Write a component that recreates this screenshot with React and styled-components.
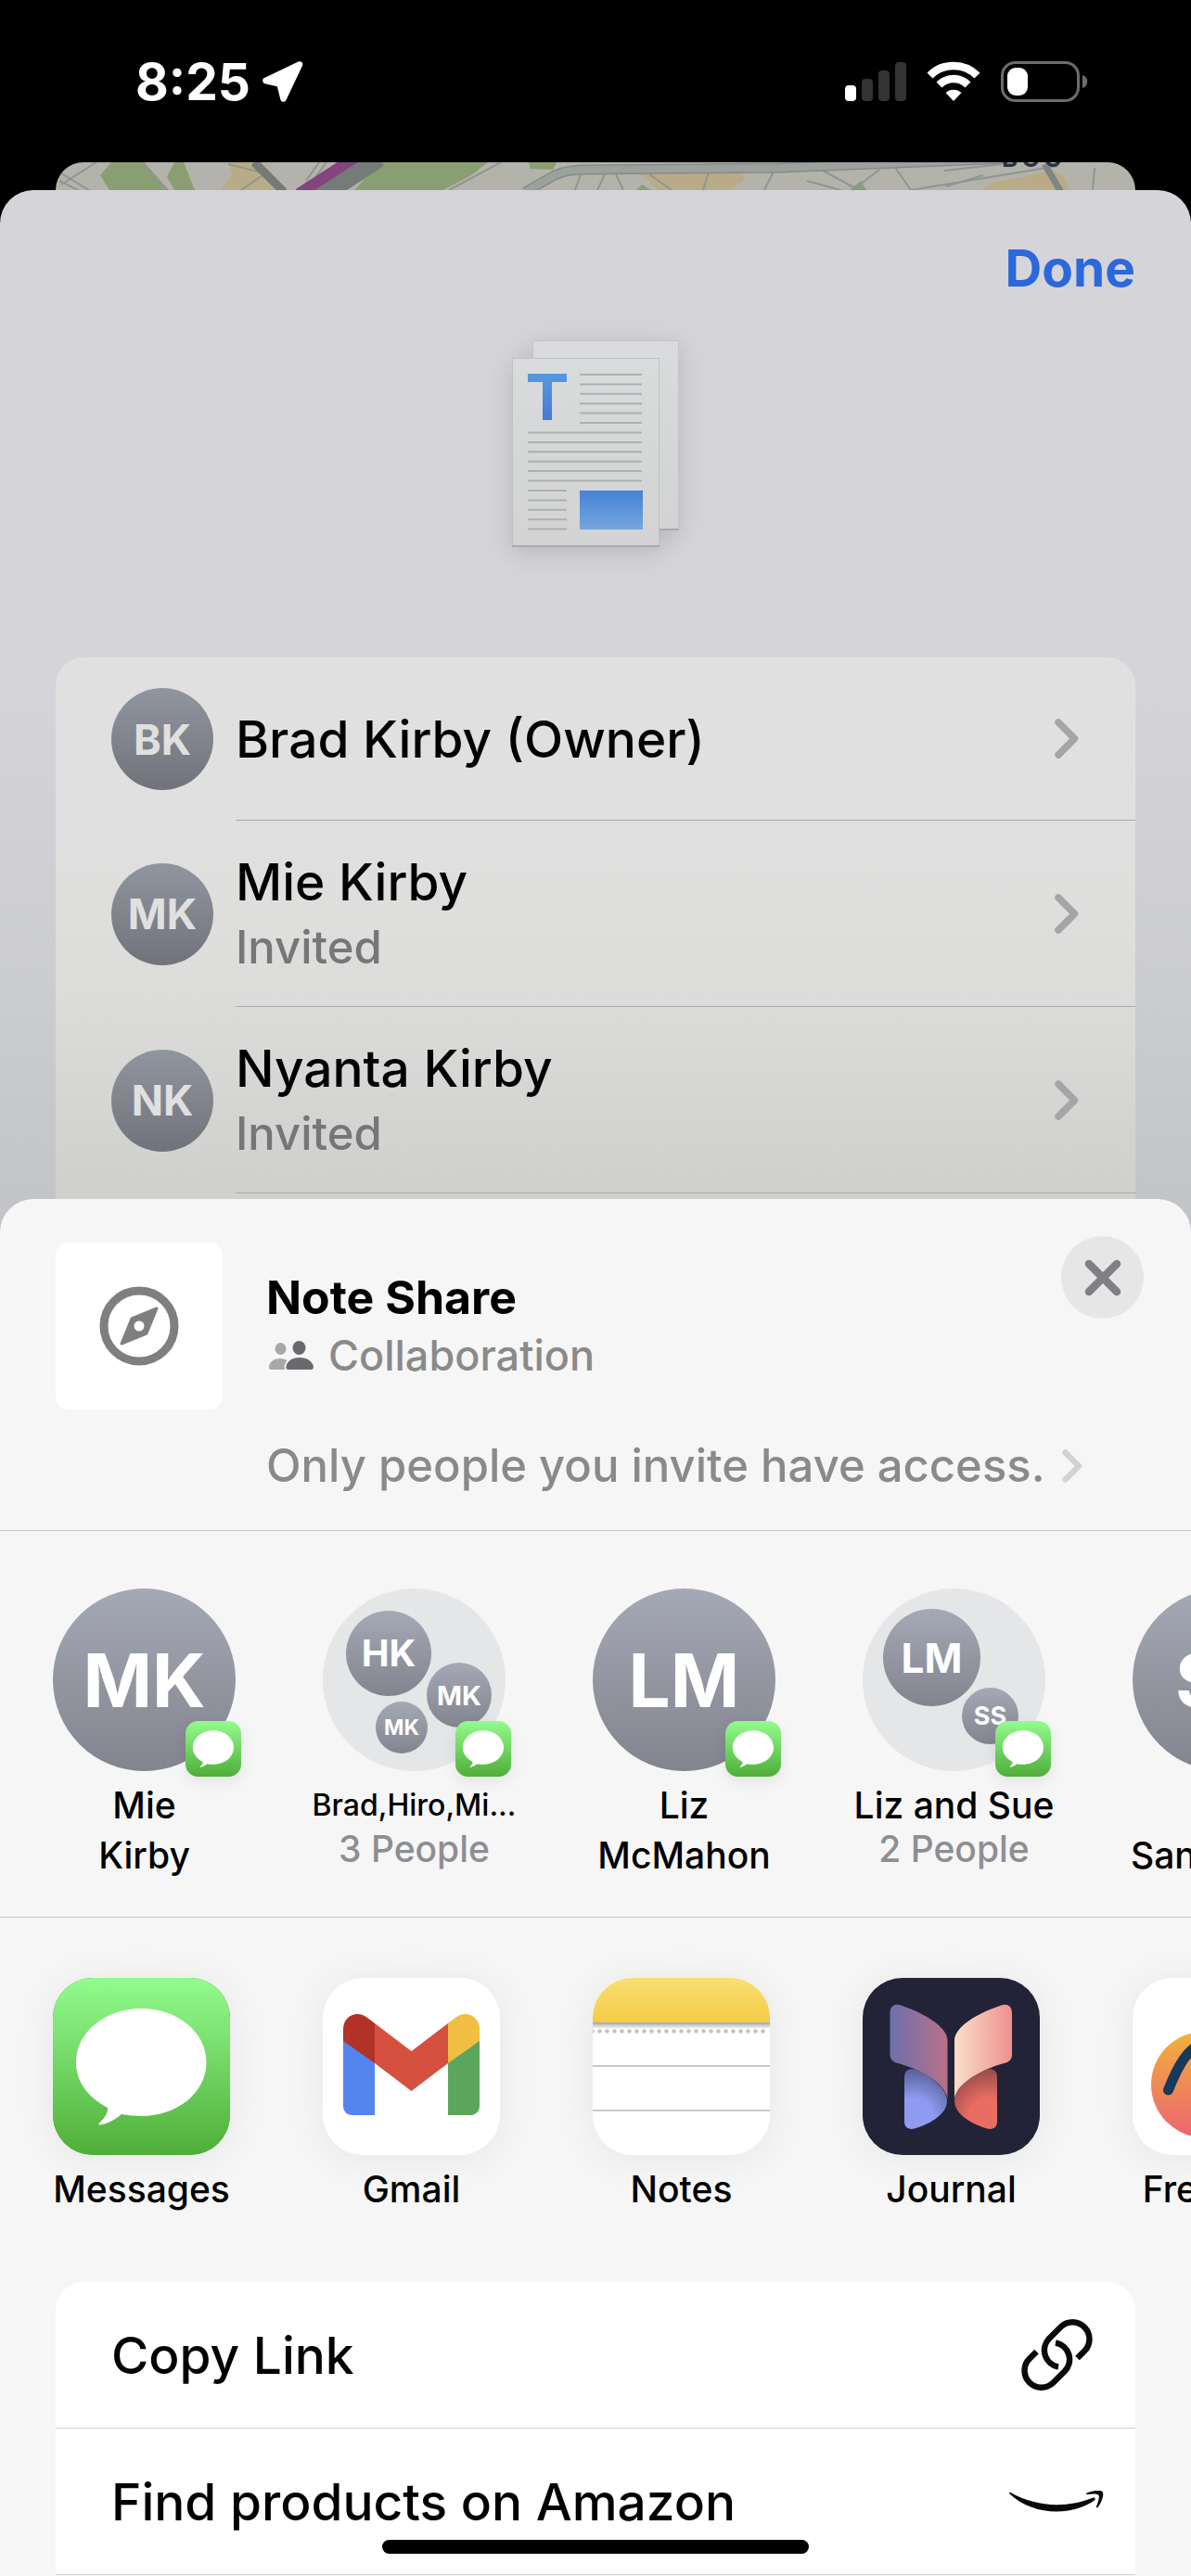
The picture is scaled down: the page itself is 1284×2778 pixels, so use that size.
import React from "react";
import styled, { createGlobalStyle } from "styled-components";

const GlobalStyle = createGlobalStyle`
  *, *::before, *::after { box-sizing: border-box; }
  body {
    margin: 0;
    background: #000;
    font-family: Inter, "Liberation Sans", sans-serif;
    color: #000;
  }
  button, a {
    font: inherit;
    color: inherit;
    background: none;
    border: 0;
    padding: 0;
    text-align: left;
    text-decoration: none;
    cursor: pointer;
  }
  h1, p, ul { margin: 0; padding: 0; }
  ul { list-style: none; }
  svg { display: block; flex: none; }
`;

const Screen = styled.div`
  position: relative;
  display: flex;
  flex-direction: column;
  min-height: 100vh;
  overflow: hidden;
`;

/* ---------- status bar ---------- */

const StatusBar = styled.header`
  display: flex;
  justify-content: space-between;
  align-items: center;
  height: 175px;
  padding: 0 111px 0 146px;
  color: #fff;
`;

const StatusGroup = styled.div`
  display: flex;
  align-items: center;
  gap: ${(p) => p.$gap}px;
`;

const Clock = styled.time`
  font-size: 55px;
  line-height: 64px;
  font-weight: 700;
`;

/* ---------- people sheet ---------- */

const MapPeek = styled.div`
  height: 30px;
  margin: 0 60px;
  border-radius: 30px 30px 0 0;
  overflow: hidden;
  background: #b3b3ab;
`;

const PeopleSheet = styled.main`
  display: flex;
  flex-direction: column;
  padding: 48px 60px 0;
  border-radius: 36px 36px 0 0;
  background: linear-gradient(#d5d4d9 0, #d5d4d9 45%, #cccdd1 75%, #c2c3c6 100%);
`;

const DoneButton = styled.button`
  align-self: flex-end;
  font-size: 55px;
  line-height: 72px;
  font-weight: 700;
  color: #2b68dc;
`;

const DocumentArt = styled.div`
  align-self: center;
  margin: 42px 0 119px;
  filter: drop-shadow(0 6px 14px rgba(0, 0, 0, 0.14));
`;

const PeopleList = styled.ul`
  padding-bottom: 46px;
  border-radius: 30px 30px 0 0;
  background: linear-gradient(#e0e0e0 0, #e0e0e0 30%, #dcdcda 58%, #d0d1ce 90%);
`;

const PersonRow = styled.button`
  display: flex;
  align-items: center;
  gap: 24px;
  width: 100%;
  padding-left: 60px;
`;

const PersonBody = styled.span`
  flex: 1;
  display: flex;
  align-items: center;
  justify-content: space-between;
  height: ${(p) => (p.$tall ? 201 : 176)}px;
  padding-right: 61px;
  border-bottom: 1px solid #a9aaab;
`;

const PersonText = styled.span`
  display: flex;
  flex-direction: column;
  padding-top: ${(p) => (p.$tall ? 4 : 0)}px;
`;

const PersonName = styled.span`
  font-size: 55px;
  line-height: 70px;
  font-weight: 500;
`;

const PersonStatus = styled.span`
  font-size: 49px;
  line-height: 72px;
  font-weight: 500;
  color: #757676;
`;

const Avatar = styled.span`
  flex: none;
  display: flex;
  align-items: center;
  justify-content: center;
  width: ${(p) => p.$size}px;
  height: ${(p) => p.$size}px;
  border-radius: 50%;
  font-size: ${(p) => p.$font}px;
  line-height: 1;
  font-weight: 700;
  color: ${(p) => (p.$dim ? "#e0e0e0" : "#fff")};
  background: ${(p) =>
    p.$dim
      ? "linear-gradient(#9195a0, #70737a)"
      : "linear-gradient(#a5a9b5, #82848e)"};
`;

/* ---------- share sheet ---------- */

const ShareSheet = styled.section`
  position: relative;
  flex: 1;
  margin-top: -40px;
  border-radius: 36px 36px 0 0;
  background: #f6f6f6;
`;

const ShareHeader = styled.div`
  display: grid;
  grid-template-columns: 180px 1fr 89px;
  column-gap: 47px;
  row-gap: 29px;
  padding: 40px 51px 37px 60px;
  border-bottom: 1px solid #c9c9c9;
`;

const Thumbnail = styled.div`
  display: flex;
  align-items: center;
  justify-content: center;
  height: 180px;
  margin-top: 7px;
  border-radius: 14px;
  background: #fff;
`;

const ShareTitles = styled.div`
  padding-top: 34px;
`;

const ShareTitle = styled.h1`
  font-size: 50px;
  line-height: 64px;
  font-weight: 700;
`;

const ShareKind = styled.p`
  display: flex;
  align-items: center;
  gap: 16px;
  padding-left: 3px;
  font-size: 45px;
  line-height: 62px;
  font-weight: 500;
  color: #8a8a8a;
`;

const CloseButton = styled.button`
  display: flex;
  align-items: center;
  justify-content: center;
  width: 89px;
  height: 89px;
  border-radius: 50%;
  background: #e6e6e6;
`;

const AccessLink = styled.a`
  grid-column: 2 / span 2;
  display: flex;
  align-items: center;
  gap: 18px;
  font-size: 49px;
  line-height: 64px;
  font-weight: 500;
  color: #8a8a8a;
  white-space: nowrap;
`;

const Strip = styled.ul`
  display: flex;
  gap: ${(p) => p.$gap}px;
  padding: ${(p) => p.$pad};
  border-bottom: ${(p) => (p.$ruled ? "1px solid #c9c9c9" : "0")};
  overflow: hidden;
`;

const ContactButton = styled.button`
  display: flex;
  flex-direction: column;
  align-items: center;
  width: 251px;
  height: 315px;
`;

const ContactPicture = styled.span`
  position: relative;
  display: block;
  margin-bottom: 10px;
`;

const GroupCircle = styled.span`
  display: block;
  width: 197px;
  height: 197px;
  border-radius: 50%;
  background: #e5e6e8;
`;

const GroupMember = styled.span`
  position: absolute;
  left: ${(p) => p.$x}px;
  top: ${(p) => p.$y}px;
`;

const Badge = styled.span`
  position: absolute;
  right: -6px;
  bottom: -6px;
  border-radius: 14px;
  box-shadow: 0 6px 16px rgba(0, 0, 0, 0.08);
`;

const ContactName = styled.span`
  font-size: ${(p) => (p.$small ? 32 : 39)}px;
  line-height: 54px;
  font-weight: 500;
  text-align: center;
  white-space: pre-line;
`;

const ContactCount = styled.span`
  font-size: 39px;
  line-height: 40px;
  font-weight: 500;
  color: #8e8e92;
`;

const AppButton = styled.button`
  display: flex;
  flex-direction: column;
  align-items: center;
  gap: 10px;
  width: 191px;
  font-size: 39px;
  line-height: 54px;
  font-weight: 500;
`;

const AppIcon = styled.span`
  display: block;
  width: 191px;
  height: 191px;
  border-radius: 43px;
  overflow: hidden;
  background: ${(p) => p.$bg};
  box-shadow: 0 4px 44px rgba(0, 0, 0, 0.07);
`;

const ActionList = styled.ul`
  margin: 0 60px;
  border-radius: 30px 30px 0 0;
  background: #fff;
`;

const ActionButton = styled.button`
  display: flex;
  align-items: center;
  justify-content: space-between;
  width: 100%;
  height: 158px;
  padding: 0 34px 0 60px;
  border-bottom: 1px solid #cfcfd1;
  font-size: 55px;
  line-height: 72px;
  font-weight: 500;
`;

const ActionIcon = styled.span`
  display: flex;
  justify-content: center;
  width: 102px;
`;

const HomeIndicator = styled.div`
  position: absolute;
  left: 50%;
  bottom: 24px;
  width: 460px;
  height: 15px;
  margin-left: -230px;
  border-radius: 8px;
  background: #000;
`;

/* ---------- drawings ---------- */

const LocationArrow = () => (
  <svg width="46" height="46" viewBox="0 0 46 46" aria-hidden="true">
    <path
      d="M41 4.500 L4.500 22 L19.500 25.500 L23.500 41.500 Z"
      fill="#fff"
      stroke="#fff"
      strokeWidth="6.500"
      strokeLinejoin="round"
    />
  </svg>
);

const SignalIcon = () => (
  <svg width="66" height="43" viewBox="0 0 66 43" aria-hidden="true">
    <rect x="0" y="26" width="12" height="17" rx="4" fill="#fff" />
    <rect x="18" y="19" width="12" height="24" rx="4" fill="#333" />
    <rect x="36" y="10" width="12" height="33" rx="4" fill="#333" />
    <rect x="54" y="1" width="12" height="42" rx="4" fill="#333" />
  </svg>
);

const WifiIcon = () => (
  <svg width="58" height="43" viewBox="0 0 58 43" aria-hidden="true">
    <path d="M29 43 L20.5 34 A12.5 12.5 0 0 1 37.5 34 Z" fill="#fff" />
    <path
      d="M13.5 25.5 A22 22 0 0 1 44.5 25.5"
      fill="none"
      stroke="#fff"
      strokeWidth="8.5"
    />
    <path
      d="M3.5 15.5 A36 36 0 0 1 54.5 15.5"
      fill="none"
      stroke="#fff"
      strokeWidth="8.5"
    />
  </svg>
);

const BatteryIcon = () => (
  <svg width="94" height="44" viewBox="0 0 94 44" aria-hidden="true">
    <rect x="1.5" y="1.5" width="82" height="41" rx="14" fill="none" stroke="#6c6c6a" strokeWidth="3" />
    <rect x="7" y="7" width="22" height="30" rx="9" fill="#fff" />
    <path d="M88 15 C95 17 95 27 88 29 Z" fill="#6c6c6a" />
  </svg>
);

const MapArt = () => (
  <svg width="100%" height="30" viewBox="0 0 1164 30" preserveAspectRatio="xMidYMid slice" aria-hidden="true">
    <g fill="#899f72">
      <path d="M60 0 H95 L122 30 H58 L48 14 Z" />
      <path d="M128 0 H138 L150 30 H128 L120 16 Z" />
      <path d="M350 0 H466 L448 14 L418 30 H322 Z" />
      <path d="M510 0 H540 L536 8 L512 7 Z" />
      <path d="M632 24 L642 30 H626 Z" />
      <path d="M868 20 L874 30 H856 Z" />
    </g>
    <g fill="#b9ab87">
      <path d="M186 0 H222 L250 30 H178 L190 14 Z" />
      <path d="M630 13 L740 11 L742 20 L726 30 H650 Z" />
      <path d="M1010 22 L1076 9 L1086 14 L1092 30 H998 Z" />
    </g>
    <g fill="none" stroke="#8f9593" strokeWidth="2">
      <path d="M44 0 L6 24 M6 12 L36 30 M4 20 L24 30" />
      <path d="M94 0 L120 30 M200 30 L226 12 L186 2 M284 0 L270 20 M292 0 L270 30" />
      <path d="M480 0 L424 30 M560 30 L566 13 M584 30 L592 13 M604 13 L612 30 M640 13 L664 30" />
      <path d="M704 10 L698 30 M774 10 L764 30 M810 20 L846 30 M822 6 L862 28 M862 28 L888 8" />
      <path d="M904 4 L922 30 M922 30 L1080 4 M958 9 L1020 2 M960 26 L1000 14 M1120 6 L1118 30" />
    </g>
    <path d="M274 40 L346 -8" fill="none" stroke="#747b78" strokeWidth="28" />
    <path d="M262 34 L324 -6" fill="none" stroke="#84447e" strokeWidth="12" />
    <path d="M214 0 L246 32" fill="none" stroke="#737a78" strokeWidth="9" />
    <path d="M506 32 L538 14 Q548 9 566 8 L780 6 L1030 -4" fill="none" stroke="#858b89" strokeWidth="11" />
    <path d="M506 32 L538 14 Q548 9 566 8 L780 6 L1030 -4" fill="none" stroke="#9da19e" strokeWidth="8" />
    <path d="M1066 2 L1084 32" fill="none" stroke="#7f8583" strokeWidth="7" />
    <text x="1020" y="5" fontSize="26" fontWeight="700" letterSpacing="4" fill="#2a333d">
      BOO
    </text>
  </svg>
);

const range = (n) => Array.from({ length: n }, (_, i) => i);

const DocumentIcon = () => (
  <svg width="180" height="223" viewBox="0 0 180 223" aria-hidden="true">
    <defs>
      <linearGradient id="docPage" x1="0" y1="0" x2="0" y2="1">
        <stop offset="0" stopColor="#d9dbdc" />
        <stop offset="1" stopColor="#d2d3d2" />
      </linearGradient>
      <linearGradient id="docT" x1="0" y1="0" x2="0" y2="1">
        <stop offset="0" stopColor="#5798de" />
        <stop offset="1" stopColor="#457bd6" />
      </linearGradient>
      <linearGradient id="docPhoto" x1="0" y1="0" x2="0" y2="1">
        <stop offset="0" stopColor="#4482d8" />
        <stop offset="1" stopColor="#77a6dc" />
      </linearGradient>
    </defs>
    <rect x="22.5" y="0.5" width="157" height="203" fill="url(#docPage)" stroke="#c3c4c5" />
    <path d="M159 204 H180" stroke="#a9aaab" strokeWidth="2" />
    <rect x="0.5" y="19.5" width="158" height="203" fill="url(#docPage)" stroke="#c0c1c2" />
    <path d="M0 222 H159" stroke="#a9aaab" strokeWidth="2" />
    <path d="M17 36 H59 V45 H43 V86 H33 V45 H17 Z" fill="url(#docT)" />
    <g stroke="#adafb0" strokeWidth="2">
      {range(6).map((i) => (
        <path key={i} d={`M73 ${37 + i * 10.4} H140`} />
      ))}
      {range(6).map((i) => (
        <path key={i} d={`M17 ${99.5 + i * 10.4} H140`} />
      ))}
      {range(5).map((i) => (
        <path key={i} d={`M17 ${162 + i * 10.4} H59`} />
      ))}
    </g>
    <rect x="73" y="162" width="68" height="42" fill="url(#docPhoto)" />
  </svg>
);

const Chevron = ({ width = 26, height = 43, color = "#a5a5a5" }) => (
  <svg width={width} height={height} viewBox="0 0 26 43" aria-hidden="true">
    <path
      d="M4 4 L21.5 21.5 L4 39"
      fill="none"
      stroke={color}
      strokeWidth="7.5"
      strokeLinecap="round"
      strokeLinejoin="round"
    />
  </svg>
);

const CompassIcon = () => (
  <svg width="86" height="86" viewBox="0 0 86 86" aria-hidden="true">
    <circle cx="43" cy="43" r="38" fill="none" stroke="#7f7f7f" strokeWidth="9" />
    <path
      d="M62 24 L51 51 L24 62 L35 35 Z M43 37.5 A5.5 5.5 0 1 0 43 48.500 A5.5 5.5 0 1 0 43 37.5 Z"
      fill="#7f7f7f"
      fillRule="evenodd"
    />
    <path d="M62 24 L51 51 L24 62 L35 35 Z" fill="none" stroke="#7f7f7f" strokeWidth="3" strokeLinejoin="round" />
  </svg>
);

const PeopleIcon = () => (
  <svg width="48" height="32" viewBox="0 0 48 32" aria-hidden="true">
    <g fill="#a8a8aa">
      <ellipse cx="12.500" cy="8.500" rx="6" ry="6.500" />
      <path d="M2 31 C0 31 0 29 0 28 C1 22 6 19 12 19 C15 19 18 20 19.500 21 C17 24 16 28 17 31 Z" />
    </g>
    <g fill="#6a6a6e">
      <ellipse cx="32.500" cy="7.500" rx="7" ry="7.500" />
      <path d="M21 31 C19 31 18 30 18.500 28 C19 22 25 18 33 18 C41 18 47 22 48 28 C48 30 47 31 45 31 Z" />
    </g>
  </svg>
);

const CloseIcon = () => (
  <svg width="40" height="40" viewBox="0 0 40 40" aria-hidden="true">
    <path d="M5 5 L35 35 M35 5 L5 35" stroke="#7f7f84" strokeWidth="8.500" strokeLinecap="round" />
  </svg>
);

const MessagesArt = ({ size, id }) => (
  <svg width={size} height={size} viewBox="0 0 191 191" aria-hidden="true">
    <defs>
      <linearGradient id={id} x1="0" y1="0" x2="0" y2="1">
        <stop offset="0" stopColor="#93fc8e" />
        <stop offset="1" stopColor="#4fae38" />
      </linearGradient>
    </defs>
    <rect width="191" height="191" rx="43" fill={`url(#${id})`} />
    <path
      d="M95.500 33 C134 33 165.500 58 165.500 91 C165.500 124 134 149 95.500 149 C88 149 81 148 74 147 C68 152 60 157 51 158.500 C49 159 49 157.500 50 156.500 C55 152 60 146 59 140 C38 129 25 112 25 91 C25 58 57 33 95.500 33 Z"
      fill="#fff"
    />
  </svg>
);

const GmailArt = () => (
  <svg width="191" height="191" viewBox="0 0 191 191" aria-hidden="true">
    <path d="M22 66 L56 91 V148 H32 C26 148 22 144 22 138 Z" fill="#5484ed" />
    <path d="M169 66 L135 91 V148 H159 C165 148 169 144 169 138 Z" fill="#5ba65c" />
    <path d="M56 49 L95.500 79 L135 49 V92 L95.500 122 L56 92 Z" fill="#d6503f" />
    <path d="M22 55 C22 42 36 34 47.500 42.500 L56 49 V92 L22 68 Z" fill="#b23229" />
    <path d="M169 55 C169 42 155 34 143.500 42.500 L135 49 V92 L169 68 Z" fill="#f0be42" />
  </svg>
);

const NotesArt = () => (
  <svg width="191" height="191" viewBox="0 0 191 191" aria-hidden="true">
    <defs>
      <linearGradient id="notesTop" x1="0" y1="0" x2="0" y2="1">
        <stop offset="0" stopColor="#f9df76" />
        <stop offset="1" stopColor="#f4cc45" />
      </linearGradient>
      <linearGradient id="notesShade" x1="0" y1="0" x2="0" y2="1">
        <stop offset="0" stopColor="#a2a2a2" />
        <stop offset="1" stopColor="#fff" />
      </linearGradient>
    </defs>
    <rect width="191" height="48" fill="url(#notesTop)" />
    <rect y="48" width="191" height="7" fill="url(#notesShade)" />
    {range(24).map((i) => (
      <circle key={i} cx={-0.5 + i * 8} cy="57.500" r="2.200" fill="#c2c2c2" />
    ))}
    <path d="M0 95 H191 M0 143 H191" stroke="#c8c8c8" strokeWidth="2" />
  </svg>
);

const JournalArt = () => (
  <svg width="191" height="191" viewBox="0 0 191 191" aria-hidden="true">
    <defs>
      <linearGradient id="wingLeft">
        <stop offset="0" stopColor="#6d70ae" />
        <stop offset="1" stopColor="#b87089" />
      </linearGradient>
      <linearGradient id="wingRight">
        <stop offset="0" stopColor="#f9dfc7" />
        <stop offset="1" stopColor="#ef908f" />
      </linearGradient>
      <radialGradient id="tailLeft" gradientUnits="userSpaceOnUse" cx="54" cy="152" r="56">
        <stop offset="0.4" stopColor="#8e9bf1" />
        <stop offset="1" stopColor="#545b91" />
      </radialGradient>
      <radialGradient id="tailRight" gradientUnits="userSpaceOnUse" cx="137" cy="152" r="56">
        <stop offset="0.4" stopColor="#ea6d62" />
        <stop offset="1" stopColor="#8e4a4b" />
      </radialGradient>
    </defs>
    <path d="M45 107 C45 99 51 97 57 99 C76 107 91 120 91 133 C91 147 72 158 56 162.500 C49 164 45 161 45 155 Z" fill="url(#tailLeft)" />
    <path d="M145 107 C145 99 139 97 133 99 C114 107 99 120 99 133 C99 147 118 158 134 162.500 C141 164 145 161 145 155 Z" fill="url(#tailRight)" />
    <path d="M29.500 38 C29.500 31 34 27 41 29.500 C66 38 91.500 52 91.500 68 V130 C88 112 60 98 38 92 C33 91 29.500 88 29.500 83 Z" fill="url(#wingLeft)" />
    <path d="M161 38 C161 31 156.500 27 149.500 29.500 C124.500 38 99 52 99 68 V130 C102.500 112 130.500 98 152.500 92 C157.500 91 161 88 161 83 Z" fill="url(#wingRight)" />
  </svg>
);

const FreeformArt = () => (
  <svg width="191" height="191" viewBox="0 0 191 191" aria-hidden="true">
    <defs>
      <linearGradient id="freeformSun" x1="0" y1="0" x2="0" y2="1">
        <stop offset="0" stopColor="#f2b13c" />
        <stop offset="1" stopColor="#ec6470" />
      </linearGradient>
    </defs>
    <circle cx="77" cy="115" r="57" fill="url(#freeformSun)" />
    <path
      d="M38.500 121 C46 102 56 83 66 76 C80 68 76 104 88 104 C104 104 108 76 124 70"
      fill="none"
      stroke="#17395b"
      strokeWidth="11"
      strokeLinecap="round"
    />
  </svg>
);

const LinkIcon = () => (
  <svg width="77" height="77" viewBox="0 0 77 77" aria-hidden="true">
    <g fill="none" stroke="#0a0a0a" strokeWidth="6.500">
      <path d="M60.500 42 L68 34.500 A18.200 18.200 0 0 0 42.500 8.500 L30 21 A18.200 18.200 0 0 0 40 51.500" />
      <path d="M16.500 35 L9 42.500 A18.200 18.200 0 0 0 34.500 68.500 L47 56 A18.200 18.200 0 0 0 37 25.500" />
    </g>
  </svg>
);

const SmileIcon = () => (
  <svg width="102" height="24" viewBox="0 0 102 24" aria-hidden="true">
    <path d="M1 1.800 C30 18 62 19 90.500 7.500 C92.500 7 93.500 9 92 10.500 C66 28 26 27 0.500 3.500 C-0.200 2.500 0.300 1.500 1 1.800 Z" fill="#0a0a0a" />
    <path d="M83 3 C88 0 98 -1 100.500 1 C103 4 99 14 95.500 18 C94.500 19 93.500 18 94 17 C96 12 97.500 7 96.500 5 C95 3 89 3.500 84 4 C83 4.200 82.500 3.500 83 3 Z" fill="#0a0a0a" />
  </svg>
);

/* ---------- data ---------- */

const people = [
  { initials: "BK", name: "Brad Kirby (Owner)" },
  { initials: "MK", name: "Mie Kirby", status: "Invited" },
  { initials: "NK", name: "Nyanta Kirby", status: "Invited" },
];

const contacts = [
  { name: "Mie\nKirby", initials: "MK" },
  {
    name: "Brad,Hiro,Mi...",
    small: true,
    count: "3 People",
    members: [
      { initials: "HK", x: 25, y: 24, size: 92, font: 40 },
      { initials: "MK", x: 112, y: 80, size: 70, font: 29 },
      { initials: "MK", x: 57, y: 122, size: 56, font: 23 },
    ],
  },
  { name: "Liz\nMcMahon", initials: "LM" },
  {
    name: "Liz and Sue",
    count: "2 People",
    members: [
      { initials: "LM", x: 22, y: 22, size: 105, font: 44 },
      { initials: "SS", x: 107, y: 107, size: 61, font: 27 },
    ],
  },
  { name: "Sue\nSanderson", initials: "SS" },
];

const apps = [
  { name: "Messages", bg: "#4fae38", art: <MessagesArt size={191} id="messagesApp" /> },
  { name: "Gmail", bg: "#fff", art: <GmailArt /> },
  { name: "Notes", bg: "#fff", art: <NotesArt /> },
  { name: "Journal", bg: "#222336", art: <JournalArt /> },
  { name: "Freeform", bg: "#fff", art: <FreeformArt /> },
];

const actions = [
  { label: "Copy Link", icon: <LinkIcon /> },
  { label: "Find products on Amazon", icon: <SmileIcon /> },
];

/* ---------- parts ---------- */

const Person = ({ initials, name, status }) => (
  <li>
    <PersonRow type="button">
      <Avatar $size={110} $font={45} $dim>
        {initials}
      </Avatar>
      <PersonBody $tall={Boolean(status)}>
        <PersonText $tall={Boolean(status)}>
          <PersonName>{name}</PersonName>
          {status && <PersonStatus>{status}</PersonStatus>}
        </PersonText>
        <Chevron />
      </PersonBody>
    </PersonRow>
  </li>
);

const Contact = ({ index, name, initials, members, count, small }) => (
  <li>
    <ContactButton type="button">
      <ContactPicture>
        {members ? (
          <GroupCircle>
            {members.map((m, i) => (
              <GroupMember key={i} $x={m.x} $y={m.y}>
                <Avatar $size={m.size} $font={m.font}>
                  {m.initials}
                </Avatar>
              </GroupMember>
            ))}
          </GroupCircle>
        ) : (
          <Avatar $size={197} $font={80}>
            {initials}
          </Avatar>
        )}
        <Badge>
          <MessagesArt size={60} id={`messagesBadge${index}`} />
        </Badge>
      </ContactPicture>
      <ContactName $small={small}>{name}</ContactName>
      {count && <ContactCount>{count}</ContactCount>}
    </ContactButton>
  </li>
);

export default function App() {
  return (
    <Screen>
      <GlobalStyle />
      <StatusBar>
        <StatusGroup $gap={12}>
          <Clock>8:25</Clock>
          <LocationArrow />
        </StatusGroup>
        <StatusGroup $gap={22}>
          <SignalIcon />
          <WifiIcon />
          <BatteryIcon />
        </StatusGroup>
      </StatusBar>

      <MapPeek>
        <MapArt />
      </MapPeek>

      <PeopleSheet>
        <DoneButton type="button">Done</DoneButton>
        <DocumentArt>
          <DocumentIcon />
        </DocumentArt>
        <PeopleList>
          {people.map((p) => (
            <Person key={p.name} {...p} />
          ))}
        </PeopleList>
      </PeopleSheet>

      <ShareSheet>
        <ShareHeader>
          <Thumbnail>
            <CompassIcon />
          </Thumbnail>
          <ShareTitles>
            <ShareTitle>Note Share</ShareTitle>
            <ShareKind>
              <PeopleIcon />
              Collaboration
            </ShareKind>
          </ShareTitles>
          <CloseButton type="button" aria-label="Close">
            <CloseIcon />
          </CloseButton>
          <AccessLink href="#access">
            Only people you invite have access.
            <Chevron width={22} height={36} color="#d2d2d2" />
          </AccessLink>
        </ShareHeader>

        <Strip $gap={40} $pad="62px 0 39px 30px" $ruled>
          {contacts.map((c, i) => (
            <Contact key={c.name} index={i} {...c} />
          ))}
        </Strip>

        <Strip $gap={100} $pad="65px 0 73px 57px">
          {apps.map((a) => (
            <li key={a.name}>
              <AppButton type="button">
                <AppIcon $bg={a.bg}>{a.art}</AppIcon>
                {a.name}
              </AppButton>
            </li>
          ))}
        </Strip>

        <ActionList>
          {actions.map((a) => (
            <li key={a.label}>
              <ActionButton type="button">
                {a.label}
                <ActionIcon>{a.icon}</ActionIcon>
              </ActionButton>
            </li>
          ))}
        </ActionList>
      </ShareSheet>
      <HomeIndicator />
    </Screen>
  );
}
